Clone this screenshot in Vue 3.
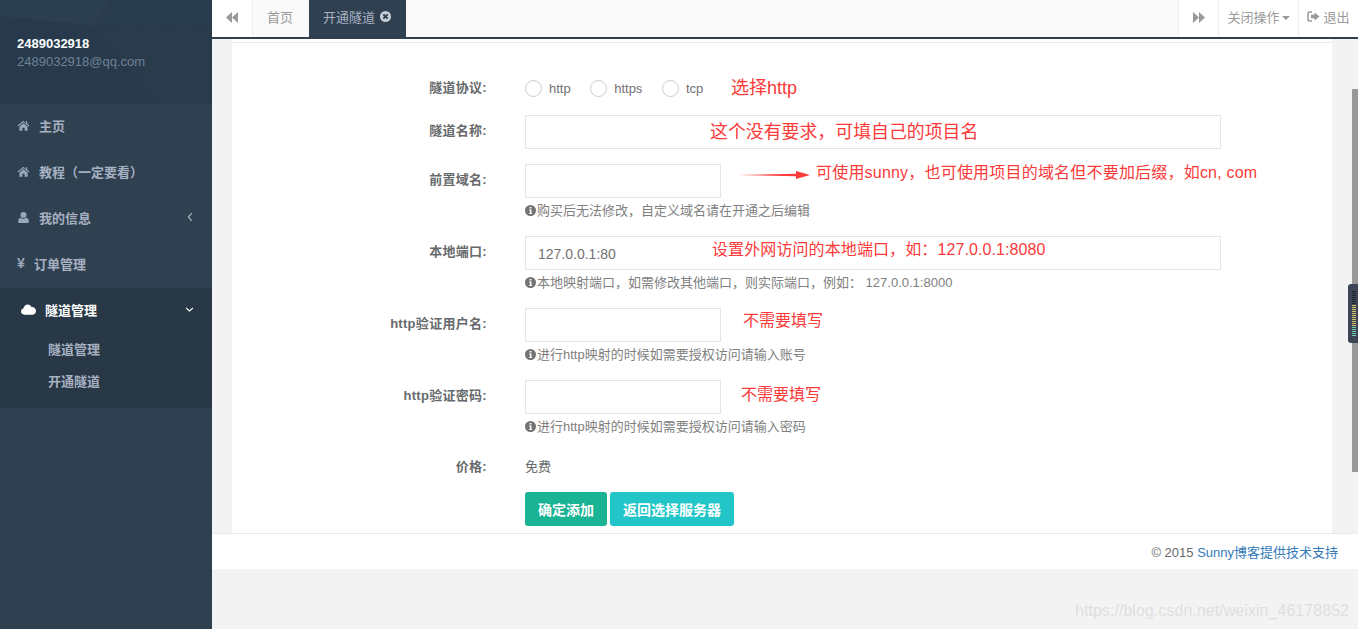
<script setup>
const navTop = [
  { label: '主页', icon: 'home' },
  { label: '教程（一定要看）', icon: 'home' },
  { label: '我的信息', icon: 'user', arrow: true },
  { label: '订单管理', icon: 'yen' }
]

const subNav = ['隧道管理', '开通隧道']

const infoRows = [
  { label: '前置域名:', help: '购买后无法修改，自定义域名请在开通之后编辑' },
  { label: '本地端口:', value: '127.0.0.1:80', wide: true, help: '本地映射端口，如需修改其他端口，则实际端口，例如： 127.0.0.1:8000' },
  { label: 'http验证用户名:', help: '进行http映射的时候如需要授权访问请输入账号' },
  { label: 'http验证密码:', help: '进行http映射的时候如需要授权访问请输入密码' }
]

const notes = [
  { text: '选择http', cls: 'n-proto' },
  { text: '这个没有要求，可填自己的项目名', cls: 'n-name' },
  { text: '可使用sunny，也可使用项目的域名但不要加后缀，如cn, com', cls: 'n-prefix' },
  { text: '设置外网访问的本地端口，如：127.0.0.1:8080', cls: 'n-port' },
  { text: '不需要填写', cls: 'n-user' },
  { text: '不需要填写', cls: 'n-pass' }
]
</script>

<template>
  <div class="page">
    <aside class="sidebar">
      <div class="profile">
        <svg class="profile-bg" viewBox="0 0 212 104" preserveAspectRatio="none">
          <polygon points="0,0 110,0 92,26 0,16" fill="#2c3f51" />
          <polygon points="110,0 212,0 212,30 92,26" fill="#293c4d" />
          <polygon points="92,26 212,30 212,104 160,104" fill="#2a3b4c" />
          <polygon points="0,16 92,26 160,104 0,104" fill="#27394a" />
        </svg>
        <strong class="profile-name">2489032918</strong>
        <span class="profile-mail">2489032918@qq.com</span>
      </div>

      <nav class="nav">
        <a v-for="item in navTop" :key="item.label" class="nav-item">
          <svg v-if="item.icon === 'home'" class="nav-icon" viewBox="0 0 14 14">
            <path d="M7 1.800.6 7.100l.8 1L7 3.500l5.600 4.600.8-1-2.400-2V2.400H9.600V4.900z" />
            <path d="M7 4.700 2.600 8.300v4.300h3.200V9.400h2.400v3.200h3.200V8.300z" />
          </svg>
          <svg v-else-if="item.icon === 'user'" class="nav-icon" viewBox="0 0 14 14">
            <circle cx="7" cy="4.200" r="3.200" />
            <path d="M4 7.200c-1.900.2-2.800 1.900-2.800 4.200 0 1 .6 1.600 1.600 1.600h8.400c1 0 1.600-.6 1.600-1.600 0-2.300-.9-4-2.800-4.200-.8.7-1.800 1.200-3 1.200s-2.200-.5-3-1.200z" />
          </svg>
          <span v-else class="nav-yen">¥</span>
          <span class="nav-label">{{ item.label }}</span>
          <svg v-if="item.arrow" class="nav-arrow" viewBox="0 0 8 12">
            <path d="M6 1.500 2 6l4 4.500" />
          </svg>
        </a>

        <div class="nav-group">
          <a class="nav-item nav-item-active">
            <svg class="nav-icon nav-cloud" viewBox="0 0 16 11">
              <path d="M3.600 11C1.600 11 0 9.600 0 7.700c0-1.500 1-2.800 2.500-3.200C3 2 4.800.2 7.200.2c1.800 0 3.300 1 4 2.600 2.500-.4 4.800 1.500 4.800 4.200 0 2.300-1.800 4-4 4z" />
            </svg>
            <span class="nav-label">隧道管理</span>
            <svg class="nav-arrow" viewBox="0 0 12 8">
              <path d="M1.500 2 6 6l4.500-4" />
            </svg>
          </a>
          <a v-for="sub in subNav" :key="sub" class="sub-item">{{ sub }}</a>
        </div>
      </nav>
    </aside>

    <main class="main">
      <header class="topbar">
        <button class="bar-btn bar-arrow">
          <svg viewBox="0 0 12 10" preserveAspectRatio="none"><path d="M6 0v10L0 5zM12 0v10L6 5z" /></svg>
        </button>
        <a class="tab">首页</a>
        <a class="tab tab-active">
          开通隧道
          <svg class="tab-close" viewBox="0 0 12 12">
            <circle cx="6" cy="6" r="6" />
            <path d="M4 4l4 4M8 4l-4 4" />
          </svg>
        </a>
        <div class="bar-fill"></div>
        <button class="bar-btn bar-arrow">
          <svg viewBox="0 0 12 10" preserveAspectRatio="none"><path d="M0 0v10l6-5zM6 0v10l6-5z" /></svg>
        </button>
        <button class="bar-btn bar-close">关闭操作<i class="caret"></i></button>
        <button class="bar-btn bar-exit">
          <svg viewBox="0 0 13 11">
            <path d="M5 1H2.200C1.500 1 1 1.500 1 2.200v6.600C1 9.500 1.500 10 2.200 10H5" fill="none" stroke="#999" stroke-width="1.500" />
            <path d="M7.500 1.500 12.500 5.500l-5 4V7.300H4V3.700h3.500z" />
          </svg>
          退出
        </button>
      </header>

      <section class="content">
        <div class="card">
          <form class="form" @submit.prevent>
            <div class="row row-proto">
              <label class="row-label">隧道协议:</label>
              <div class="radios">
                <span v-for="p in ['http', 'https', 'tcp']" :key="p" class="radio"><i></i>{{ p }}</span>
              </div>
            </div>
            <div class="row">
              <label class="row-label">隧道名称:</label>
              <div class="row-field"><div class="input input-wide"></div></div>
            </div>
            <div v-for="row in infoRows" :key="row.label" class="row">
              <label class="row-label">{{ row.label }}</label>
              <div class="row-field">
                <div class="input" :class="{ 'input-wide': row.wide }">{{ row.value }}</div>
                <p class="help">
                  <svg class="help-icon" viewBox="0 0 12 12">
                    <circle cx="6" cy="6" r="6" />
                    <path d="M5 2.200h2v1.600H5zM4.500 5h2.500v3.700h.7v1.100H4.500V8.700h.8V6.100h-.8z" fill="#fff" />
                  </svg>{{ row.help }}
                </p>
              </div>
            </div>
            <div class="row row-price">
              <label class="row-label">价格:</label>
              <div class="row-field price">免费</div>
            </div>
            <div class="row row-actions">
              <span class="row-label"></span>
              <div class="actions">
                <button class="btn btn-primary">确定添加</button>
                <button class="btn btn-info">返回选择服务器</button>
              </div>
            </div>
          </form>
        </div>
      </section>

      <footer class="footer">© 2015 <a>Sunny博客提供技术支持</a></footer>
      <div class="rest"></div>
    </main>

    <!-- red notes painted over the screenshot -->
    <span v-for="n in notes" :key="n.cls" class="note" :class="n.cls">{{ n.text }}</span>
    <svg class="note-arrow" viewBox="0 0 72 8">
      <path d="M0 4 58 2.800V0L72 4 58 8V5.200z" />
    </svg>

    <div class="scroll-track"></div>
    <div class="scroll-grip"><span></span></div>
    <span class="watermark">https://blog.csdn.net/weixin_46178852</span>
  </div>
</template>

<style>
html,
body {
  margin: 0;
  overflow: hidden;
  background: #f3f3f4;
}
</style>

<style scoped>
.page {
  position: relative;
  display: flex;
  width: 100%;
  height: 100vh;
  overflow: hidden;
  font-family: "Liberation Sans", "Noto Sans CJK SC", sans-serif;
  font-size: 13px;
  color: #676a6c;
}

/* sidebar */
.sidebar {
  width: 212px;
  flex: none;
  background: #2f4050;
}

.profile {
  position: relative;
  height: 104px;
  box-sizing: border-box;
  padding: 35px 0 0 17px;
  display: flex;
  flex-direction: column;
  gap: 1px;
  background: #293846;
  overflow: hidden;
}

.profile-bg {
  position: absolute;
  inset: 0;
  width: 100%;
  height: 100%;
}

.profile-name,
.profile-mail {
  position: relative;
  line-height: 17px;
}

.profile-name {
  color: #fff;
  font-size: 13px;
}

.profile-mail {
  color: #6e8297;
  font-size: 13px;
}

.nav-item {
  display: flex;
  align-items: center;
  box-sizing: border-box;
  height: 46px;
  padding: 0 18px 4px 17px;
  color: #a7b1c2;
  font-weight: 600;
}

.nav-icon {
  width: 13px;
  height: 13px;
  flex: none;
  margin-right: 9px;
  fill: #9aa6bb;
}

.nav-yen {
  width: 8px;
  margin-right: 9px;
  color: #9aa6bb;
  font-size: 14px;
  font-weight: 700;
}

.nav-label {
  flex: 1;
}

.nav-arrow {
  width: 8px;
  height: 10px;
  fill: none;
  stroke: #a7b1c2;
  stroke-width: 1.400;
}

.nav-group {
  height: 120px;
  background: #293846;
}

.nav-item-active {
  height: 44px;
  margin-bottom: 2px;
  padding-left: 21px;
  padding-bottom: 2px;
  color: #fff;
}

.nav-cloud {
  width: 15px;
  height: 11px;
  margin-right: 9px;
  fill: #fff;
}

.nav-item-active .nav-arrow {
  width: 9px;
  height: 7px;
  stroke: #fff;
}

.sub-item {
  display: block;
  height: 32px;
  line-height: 32px;
  padding-left: 48px;
  color: #a7b1c2;
  font-weight: 600;
}

/* top bar */
.main {
  flex: 1;
  min-width: 0;
  display: flex;
  flex-direction: column;
}

.topbar {
  display: flex;
  height: 37px;
  flex: none;
  background: #fafafa;
  border-bottom: 2px solid #2f4050;
}

.bar-btn {
  height: 37px;
  padding: 0 0 5px;
  border: 0;
  border-left: 1px solid #eee;
  background: #fff;
  color: #999;
  font: inherit;
  display: flex;
  align-items: center;
  justify-content: center;
}

.bar-arrow {
  width: 40px;
  padding-bottom: 2px;
}

.bar-arrow:first-child {
  border-left: 0;
}

.bar-arrow svg {
  width: 12px;
  height: 11px;
  fill: #999;
}

.tab {
  display: flex;
  align-items: center;
  gap: 4px;
  padding: 0 16px 5px 14px;
  border-left: 1px solid #eee;
  color: #999;
}

.tab-active {
  padding: 0 14px 5px 14px;
  border-left: 0;
  background: #2f4050;
  color: #a7b1c2;
}

.tab-close {
  width: 13px;
  height: 13px;
  margin-top: 1px;
  fill: #c5ccd6;
  stroke: #2f4050;
  stroke-width: 1.800;
}

.bar-fill {
  flex: 1;
}

.bar-close {
  width: 80px;
}

.caret {
  margin: 3px 0 0 2px;
  border-top: 4px solid #999;
  border-left: 4px solid transparent;
  border-right: 4px solid transparent;
}

.bar-exit {
  width: 60px;
  gap: 3px;
}

.bar-exit svg {
  width: 13px;
  height: 11px;
  fill: #999;
}

/* form */
.content {
  flex: none;
  height: 494px;
  padding: 0 26px 0 20px;
  background: #f3f3f4;
}

.card {
  height: 100%;
  box-sizing: border-box;
  padding-top: 3px;
  background: #fff;
}

.form {
  height: 100%;
  box-sizing: border-box;
  padding-top: 28px;
  border-top: 1px solid #e7eaec;
}

.row {
  display: flex;
  margin-bottom: 15px;
}

.row-label {
  width: 255px;
  flex: none;
  margin-right: 38px;
  padding-top: 6px;
  line-height: 20px;
  text-align: right;
  font-weight: 700;
  letter-spacing: .3px;
}

.row-proto {
  height: 34px;
  margin-bottom: 10px;
}

.row-proto .row-label {
  padding-top: 7px;
}

.radios {
  display: flex;
  align-items: center;
  gap: 19.5px;
  height: 34px;
  color: #737373;
}

.radio {
  display: flex;
  align-items: center;
  gap: 7px;
}

.radio i {
  width: 15px;
  height: 15px;
  border: 1px solid #ccc;
  border-radius: 50%;
}

.row-field {
  flex: 1;
}

.input {
  box-sizing: border-box;
  width: 196px;
  height: 34px;
  padding: 0 12px;
  line-height: 34px;
  border: 1px solid #e5e6e7;
  font-size: 14px;
  color: #737373;
}

.input-wide {
  width: 696px;
}

.help {
  margin: 4px 0 0;
  height: 19px;
  line-height: 18px;
  color: #808080;
  font-size: 13px;
  white-space: nowrap;
}

.help-icon {
  width: 11px;
  height: 11px;
  margin-right: 1px;
  vertical-align: -1px;
  fill: #737373;
}

.row-price {
  height: 25px;
  margin-bottom: 15px;
}

.price {
  padding-top: 5px;
  line-height: 20px;
}

.row-price .row-label {
  padding-top: 5px;
}

.row-actions {
  margin: 0;
}

.actions {
  display: flex;
  gap: 3px;
}

.btn {
  height: 34px;
  padding: 0;
  border: 0;
  border-radius: 3px;
  color: #fff;
  font: inherit;
  font-size: 14px;
  font-weight: 600;
}

.btn-primary {
  width: 82px;
  background: #1ab394;
}

.btn-info {
  width: 124px;
  background: #23c6c8;
}

/* footer */
.footer {
  flex: none;
  height: 36px;
  box-sizing: border-box;
  padding-right: 20px;
  line-height: 37px;
  text-align: right;
  background: #fff;
  border-top: 1px solid #e7eaec;
}

.footer a {
  color: #337ab7;
}

.rest {
  flex: 1;
  background: #f3f3f4;
}

/* overlays */
.note {
  position: absolute;
  color: #fb3a3a;
  font-size: 16px;
  line-height: 22px;
  white-space: nowrap;
}

.n-proto { left: 731px; top: 77px; font-size: 18px; }
.n-name { left: 710px; top: 121px; font-size: 17.9px; }
.n-prefix { left: 816px; top: 162px; letter-spacing: .2px; }
.n-port { left: 712px; top: 239px; letter-spacing: .1px; }
.n-user { left: 743px; top: 310px; }
.n-pass { left: 741px; top: 384px; }

.note-arrow {
  position: absolute;
  left: 738px;
  top: 171px;
  width: 72px;
  height: 8px;
  fill: #fb3a3a;
}

.scroll-track {
  position: absolute;
  right: 0;
  top: 89px;
  width: 6px;
  height: 383px;
  background: #999;
}

.scroll-grip {
  position: absolute;
  right: 0;
  top: 284px;
  width: 10px;
  height: 59px;
  box-sizing: border-box;
  padding: 7px 2px 7px 4px;
  background: #3c4456;
  border-radius: 3px 0 0 3px;
}

.scroll-grip span {
  display: block;
  height: 100%;
  background:
    repeating-linear-gradient(to bottom, transparent 0 1px, #3c4456 1px 2px),
    linear-gradient(to bottom, #20242e 0 31%, #d8c869 31% 77%, #6fd0b0 77%);
}

.watermark {
  position: absolute;
  left: 1075px;
  top: 601px;
  color: #dfdfdf;
  font-size: 16px;
  letter-spacing: .05px;
  line-height: 20px;
  white-space: nowrap;
}
</style>
